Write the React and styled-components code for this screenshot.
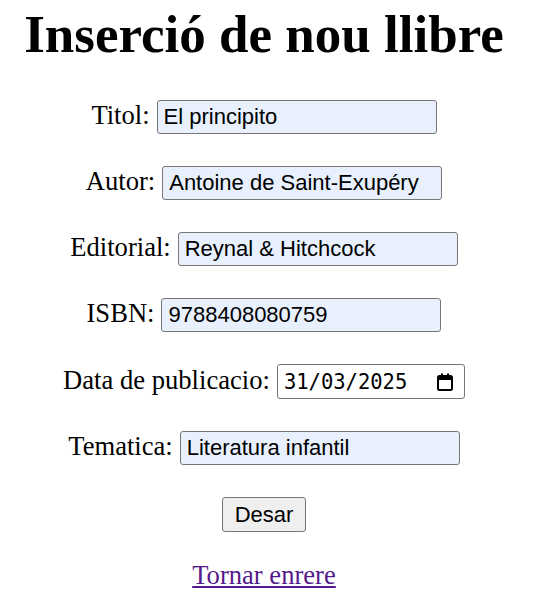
import React from 'react'
import styled, { createGlobalStyle } from 'styled-components'

const GlobalStyle = createGlobalStyle`
  body {
    margin: 0;
    background: #fff;
    color: #000;
    font-family: "Liberation Serif", "Times New Roman", serif;
  }
`

const Page = styled.div`
  display: flex;
  flex-direction: column;
  align-items: center;
  padding: 0 14px 0 0;
`

const Title = styled.h1`
  font-size: 53px;
  font-weight: 700;
  margin: 4px 0 36px;
  line-height: 60px;
`

const Form = styled.form`
  display: flex;
  flex-direction: column;
  align-items: center;
  gap: 32px;
`

const Row = styled.div`
  display: flex;
  align-items: baseline;
  gap: 7px;
  font-size: 26.6px;
`

const Input = styled.input`
  box-sizing: border-box;
  width: 280px;
  height: 34px;
  padding: 1px 6px;
  font-family: "Liberation Sans", Arial, sans-serif;
  font-size: 22px;
  color: #000;
  background: #e8f0fe;
  border: 1px solid #767676;
  border-radius: 3px;
  outline: none;
`

const DateBox = styled.div`
  box-sizing: border-box;
  width: 188px;
  height: 35px;
  display: flex;
  align-items: center;
  justify-content: space-between;
  padding: 0 11px 0 6px;
  font-family: "DejaVu Sans Mono", "Liberation Mono", monospace;
  font-size: 20.5px;
  background: #fff;
  border: 1px solid #767676;
  border-radius: 3px;
`

const Button = styled.button`
  box-sizing: border-box;
  width: 84px;
  height: 35px;
  font-family: "Liberation Sans", Arial, sans-serif;
  font-size: 22px;
  color: #000;
  background: #efefef;
  border: 1px solid #767676;
  border-radius: 3px;
  padding: 0;
`

const BackLink = styled.a`
  margin-top: 28px;
  font-size: 26.6px;
  color: #551a8b;
  text-decoration: underline;
`

const CalendarIcon = () => (
  <svg width="16" height="18" viewBox="0 0 16 18">
    <rect x="1" y="3" width="14" height="14" rx="1.5" fill="none" stroke="#000" strokeWidth="2" />
    <rect x="1" y="3" width="14" height="4" fill="#000" />
    <rect x="4" y="0.5" width="2" height="3" fill="#000" />
    <rect x="10" y="0.5" width="2" height="3" fill="#000" />
  </svg>
)

const fields = [
  { label: 'Titol:', value: 'El principito' },
  { label: 'Autor:', value: 'Antoine de Saint-Exupéry' },
  { label: 'Editorial:', value: 'Reynal & Hitchcock' },
  { label: 'ISBN:', value: '9788408080759' },
]

const App = () => {
  return (
    <Page>
      <GlobalStyle />
      <Title>Inserció de nou llibre</Title>
      <Form onSubmit={e => e.preventDefault()}>
        {fields.map(f => (
          <Row key={f.label}>
            <label>{f.label}</label>
            <Input defaultValue={f.value} />
          </Row>
        ))}
        <Row>
          <label>Data de publicacio:</label>
          <DateBox>
            <span>31/03/2025</span>
            <CalendarIcon />
          </DateBox>
        </Row>
        <Row>
          <label>Tematica:</label>
          <Input defaultValue="Literatura infantil" />
        </Row>
        <Button type="submit">Desar</Button>
      </Form>
      <BackLink href="#">Tornar enrere</BackLink>
    </Page>
  )
}

export default App
